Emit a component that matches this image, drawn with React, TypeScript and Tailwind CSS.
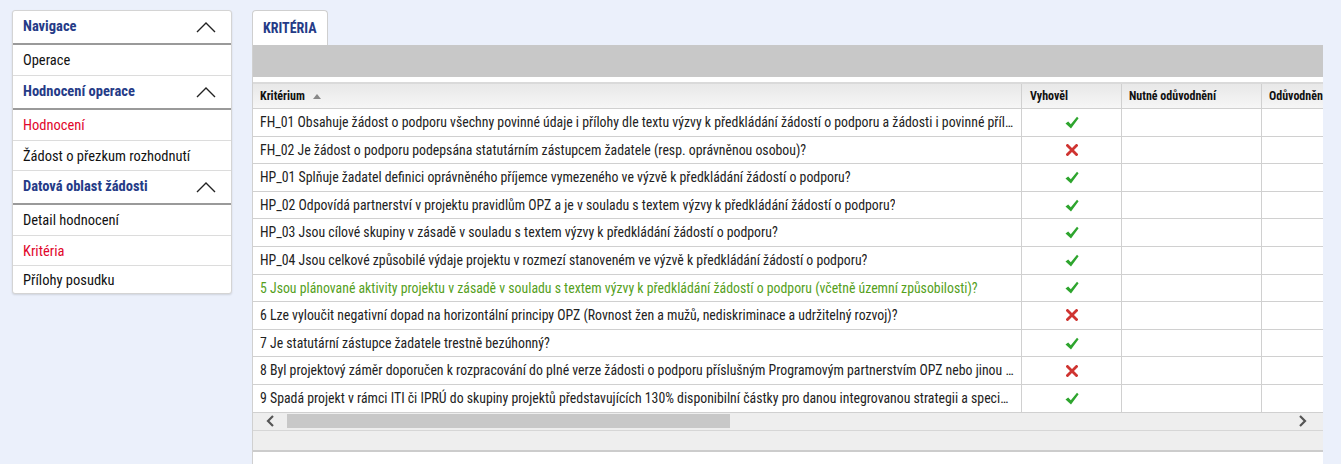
import { FC } from 'react';

const font = "font-['Roboto_Condensed','DejaVu_Sans_Condensed','Roboto',sans-serif]";

interface NavItem {
  label: string;
  active?: boolean;
}

interface NavGroup {
  title: string;
  items: NavItem[];
}

const groups: NavGroup[] = [
  { title: 'Navigace', items: [{ label: 'Operace' }] },
  {
    title: 'Hodnocení operace',
    items: [{ label: 'Hodnocení', active: true }, { label: 'Žádost o přezkum rozhodnutí' }]
  },
  {
    title: 'Datová oblast žádosti',
    items: [{ label: 'Detail hodnocení' }, { label: 'Kritéria', active: true }, { label: 'Přílohy posudku' }]
  }
];

interface Row {
  text: string;
  ok: boolean;
  highlight?: boolean;
}

const rows: Row[] = [
  { text: 'FH_01 Obsahuje žádost o podporu všechny povinné údaje i přílohy dle textu výzvy k předkládání žádostí o podporu a žádosti i povinné přílohy jsou v souladu', ok: true },
  { text: 'FH_02 Je žádost o podporu podepsána statutárním zástupcem žadatele (resp. oprávněnou osobou)?', ok: false },
  { text: 'HP_01 Splňuje žadatel definici oprávněného příjemce vymezeného ve výzvě k předkládání žádostí o podporu?', ok: true },
  { text: 'HP_02 Odpovídá partnerství v projektu pravidlům OPZ a je v souladu s textem výzvy k předkládání žádostí o podporu?', ok: true },
  { text: 'HP_03 Jsou cílové skupiny v zásadě v souladu s textem výzvy k předkládání žádostí o podporu?', ok: true },
  { text: 'HP_04 Jsou celkové způsobilé výdaje projektu v rozmezí stanoveném ve výzvě k předkládání žádostí o podporu?', ok: true },
  { text: '5 Jsou plánované aktivity projektu v zásadě v souladu s textem výzvy k předkládání žádostí o podporu (včetně územní způsobilosti)?', ok: true, highlight: true },
  { text: '6 Lze vyloučit negativní dopad na horizontální principy OPZ (Rovnost žen a mužů, nediskriminace a udržitelný rozvoj)?', ok: false },
  { text: '7 Je statutární zástupce žadatele trestně bezúhonný?', ok: true },
  { text: '8 Byl projektový záměr doporučen k rozpracování do plné verze žádosti o podporu příslušným Programovým partnerstvím OPZ nebo jinou platformou', ok: false },
  { text: '9 Spadá projekt v rámci ITI či IPRÚ do skupiny projektů představujících 130% disponibilní částky pro danou integrovanou strategii a specifický cíl?', ok: true }
];

const Chevron: FC = () => (
  <svg width="20" height="12" viewBox="0 0 20 12" fill="none" stroke="#222" strokeWidth="1.4">
    <path d="M1 11 L10 2 L19 11" />
  </svg>
);

const Check: FC = () => (
  <svg width="14" height="13" viewBox="0 0 14 13">
    <path d="M0.5 7.5 L3.2 5.6 L5.8 8.2 L12 0.8 L13.6 2.2 L6 12.6 Z" fill="#2ea52e" />
  </svg>
);

const Cross: FC = () => (
  <svg width="12" height="12" viewBox="0 0 12 12">
    <path d="M1.5 1.5 L10.5 10.5 M10.5 1.5 L1.5 10.5" stroke="#cf3431" strokeWidth="2.8" strokeLinecap="square" />
  </svg>
);

const Sidebar: FC = () => (
  <div className="w-[220px] shrink-0 self-start bg-white border border-[#d4d4d4] rounded-[3px] shadow-[0_1px_2px_rgba(0,0,0,0.12)] overflow-hidden">
    {groups.map((g, gi) => (
      <div key={g.title}>
        <div
          className={`flex items-center justify-between pl-[10px] pr-[15px] border-b-2 border-[#9a9a9a] ${gi > 0 ? 'h-[35px] border-t border-t-[#dcdcdc]' : 'h-[34px] pb-[1px]'}`}
        >
          <span className="text-[14.5px] font-bold text-[#253b87]">{g.title}</span>
          <Chevron />
        </div>
        {g.items.map((it, ii) => {
          const last = gi === groups.length - 1 && ii === g.items.length - 1;
          return (
            <div
              key={it.label}
              className={`flex items-center pl-[10px] text-[14.5px] ${last ? 'h-[28px] pt-[3px]' : 'h-[30px] pt-[2px]'} ${ii > 0 ? 'border-t border-[#dcdcdc]' : ''} ${it.active ? 'text-[#e1062c]' : 'text-[#111]'}`}
            >
              {it.label}
            </div>
          );
        })}
      </div>
    ))}
  </div>
);

const App: FC = () => {
  return (
    <div className={`w-[1341px] h-[464px] overflow-hidden bg-[#ebf0fb] flex pt-[10px] pl-[12px] pr-[18px] gap-[20px] ${font}`}>
      <Sidebar />
      <div className="flex-1 min-w-0 flex flex-col">
        <div className="flex">
          <div className="h-[35px] px-[10px] flex items-center bg-white border border-b-0 border-[#cfcfcf] rounded-t-[4px] text-[14px] font-bold text-[#253b87]">
            KRITÉRIA
          </div>
        </div>
        <div className="flex-1 bg-white border-l border-[#d0d0d0] flex flex-col">
          <div className="h-[32px] bg-[#c8c8c8]" />
          <div className="h-[5px]" />
          <div className="border-t-2 border-[#dadada] overflow-hidden">
            <div className="w-[1100px]">
              <div className="flex h-[25px] text-[12px] font-bold text-[#111] bg-gradient-to-b from-[#e8e8e8] to-[#f6f6f6] border-b border-[#d0d0d0]">
                <div className="w-[768px] shrink-0 flex items-center pl-[7px] gap-[8px]">
                  Kritérium
                  <svg width="8" height="5" viewBox="0 0 8 5">
                    <path d="M0 5 L4 0 L8 5 Z" fill="#888" />
                  </svg>
                </div>
                <div className="w-[100px] shrink-0 flex items-center pl-[8px] border-l border-[#d0d0d0]">Vyhověl</div>
                <div className="w-[140px] shrink-0 flex items-center pl-[7px] border-l border-[#d0d0d0]">Nutné odůvodnění</div>
                <div className="w-[92px] shrink-0 flex items-center pl-[7px] border-l border-[#d0d0d0]">Odůvodnění</div>
              </div>
              {rows.map(r => (
                <div key={r.text} className="flex h-[27.6px] border-b border-[#d0d0d0] text-[13.8px]">
                  <div
                    className={`w-[768px] shrink-0 flex items-center pl-[7px] pr-[6px] ${r.highlight ? 'text-[#55a01c]' : 'text-[#222]'}`}
                  >
                    <span className="truncate">{r.text}</span>
                  </div>
                  <div className="w-[100px] shrink-0 flex items-center justify-center border-l border-[#d0d0d0]">
                    {r.ok ? <Check /> : <Cross />}
                  </div>
                  <div className="w-[140px] shrink-0 border-l border-[#d0d0d0]" />
                  <div className="w-[92px] shrink-0 border-l border-[#d0d0d0]" />
                </div>
              ))}
            </div>
            <div className="h-[18px] bg-[#eeeeee] flex items-center border-b border-[#d6d6d6]">
              <div className="w-[34px] flex items-center justify-center">
                <svg width="8" height="12" viewBox="0 0 8 12" fill="none" stroke="#555" strokeWidth="2.2">
                  <path d="M7 1 L2 6 L7 11" />
                </svg>
              </div>
              <div className="w-[443px] h-[14px] bg-[#c8c8c8]" />
              <div className="flex-1" />
              <div className="w-[40px] flex items-center justify-center">
                <svg width="8" height="12" viewBox="0 0 8 12" fill="none" stroke="#555" strokeWidth="2.2">
                  <path d="M1 1 L6 6 L1 11" />
                </svg>
              </div>
            </div>
            <div className="h-[21px] bg-[#eeeeee] border-b-2 border-[#cccccc]" />
          </div>
        </div>
      </div>
    </div>
  );
};

export default App;
